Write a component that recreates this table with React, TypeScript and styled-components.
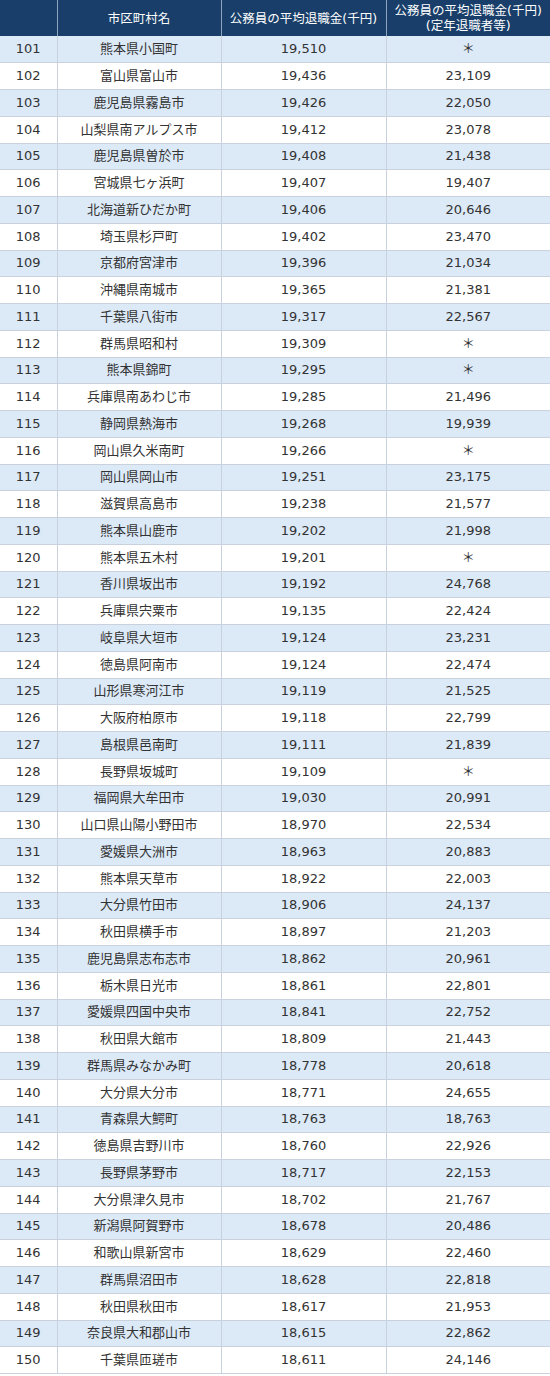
import styled, { createGlobalStyle } from "styled-components";

const GlobalStyle = createGlobalStyle`
  html, body {
    margin: 0;
    padding: 0;
    background: #ffffff;
  }
  body {
    font-family: "DejaVu Sans", "Noto Sans CJK JP", sans-serif;
    color: #333;
  }
`;

const rows: [number, string, string, string][] = [
  [101, "熊本県小国町", "19,510", "＊"],
  [102, "富山県富山市", "19,436", "23,109"],
  [103, "鹿児島県霧島市", "19,426", "22,050"],
  [104, "山梨県南アルプス市", "19,412", "23,078"],
  [105, "鹿児島県曽於市", "19,408", "21,438"],
  [106, "宮城県七ヶ浜町", "19,407", "19,407"],
  [107, "北海道新ひだか町", "19,406", "20,646"],
  [108, "埼玉県杉戸町", "19,402", "23,470"],
  [109, "京都府宮津市", "19,396", "21,034"],
  [110, "沖縄県南城市", "19,365", "21,381"],
  [111, "千葉県八街市", "19,317", "22,567"],
  [112, "群馬県昭和村", "19,309", "＊"],
  [113, "熊本県錦町", "19,295", "＊"],
  [114, "兵庫県南あわじ市", "19,285", "21,496"],
  [115, "静岡県熱海市", "19,268", "19,939"],
  [116, "岡山県久米南町", "19,266", "＊"],
  [117, "岡山県岡山市", "19,251", "23,175"],
  [118, "滋賀県高島市", "19,238", "21,577"],
  [119, "熊本県山鹿市", "19,202", "21,998"],
  [120, "熊本県五木村", "19,201", "＊"],
  [121, "香川県坂出市", "19,192", "24,768"],
  [122, "兵庫県宍粟市", "19,135", "22,424"],
  [123, "岐阜県大垣市", "19,124", "23,231"],
  [124, "徳島県阿南市", "19,124", "22,474"],
  [125, "山形県寒河江市", "19,119", "21,525"],
  [126, "大阪府柏原市", "19,118", "22,799"],
  [127, "島根県邑南町", "19,111", "21,839"],
  [128, "長野県坂城町", "19,109", "＊"],
  [129, "福岡県大牟田市", "19,030", "20,991"],
  [130, "山口県山陽小野田市", "18,970", "22,534"],
  [131, "愛媛県大洲市", "18,963", "20,883"],
  [132, "熊本県天草市", "18,922", "22,003"],
  [133, "大分県竹田市", "18,906", "24,137"],
  [134, "秋田県横手市", "18,897", "21,203"],
  [135, "鹿児島県志布志市", "18,862", "20,961"],
  [136, "栃木県日光市", "18,861", "22,801"],
  [137, "愛媛県四国中央市", "18,841", "22,752"],
  [138, "秋田県大館市", "18,809", "21,443"],
  [139, "群馬県みなかみ町", "18,778", "20,618"],
  [140, "大分県大分市", "18,771", "24,655"],
  [141, "青森県大鰐町", "18,763", "18,763"],
  [142, "徳島県吉野川市", "18,760", "22,926"],
  [143, "長野県茅野市", "18,717", "22,153"],
  [144, "大分県津久見市", "18,702", "21,767"],
  [145, "新潟県阿賀野市", "18,678", "20,486"],
  [146, "和歌山県新宮市", "18,629", "22,460"],
  [147, "群馬県沼田市", "18,628", "22,818"],
  [148, "秋田県秋田市", "18,617", "21,953"],
  [149, "奈良県大和郡山市", "18,615", "22,862"],
  [150, "千葉県匝瑳市", "18,611", "24,146"],
];

const Table = styled.table`
  width: 550px;
  border-collapse: collapse;
  table-layout: fixed;
  font-size: 13px;
`;

const HeadRow = styled.tr`
  height: 36px;
  background: #183e69;
`;

const HeadCell = styled.th`
  color: #ffffff;
  font-weight: 400;
  font-size: 12.5px;
  line-height: 15px;
  text-align: center;
  padding: 0 2px;
  white-space: nowrap;
  border-left: 1px solid #8fa4bf;
  &:first-child {
    border-left: none;
  }
`;

const Row = styled.tr<{ $shade: boolean }>`
  height: 26.76px;
  background: ${(p) => (p.$shade ? "#dce9f7" : "#ffffff")};
  border-bottom: 1px solid #c9d2dc;
`;

const Cell = styled.td`
  text-align: center;
  padding: 0;
  line-height: 16px;
  border-left: 1px solid #c9d2dc;
  &:first-child {
    border-left: none;
  }
`;

export default function App() {
  return (
    <>
      <GlobalStyle />
      <Table>
        <colgroup>
          <col style={{ width: 57 }} />
          <col style={{ width: 164 }} />
          <col style={{ width: 165 }} />
          <col style={{ width: 164 }} />
        </colgroup>
        <thead>
          <HeadRow>
            <HeadCell />
            <HeadCell>市区町村名</HeadCell>
            <HeadCell>公務員の平均退職金(千円)</HeadCell>
            <HeadCell>
              公務員の平均退職金(千円)
              <br />
              (定年退職者等)
            </HeadCell>
          </HeadRow>
        </thead>
        <tbody>
          {rows.map(([rank, name, avg, retire], i) => (
            <Row key={rank} $shade={i % 2 === 0}>
              <Cell>{rank}</Cell>
              <Cell>{name}</Cell>
              <Cell>{avg}</Cell>
              <Cell>{retire}</Cell>
            </Row>
          ))}
        </tbody>
      </Table>
    </>
  );
}
